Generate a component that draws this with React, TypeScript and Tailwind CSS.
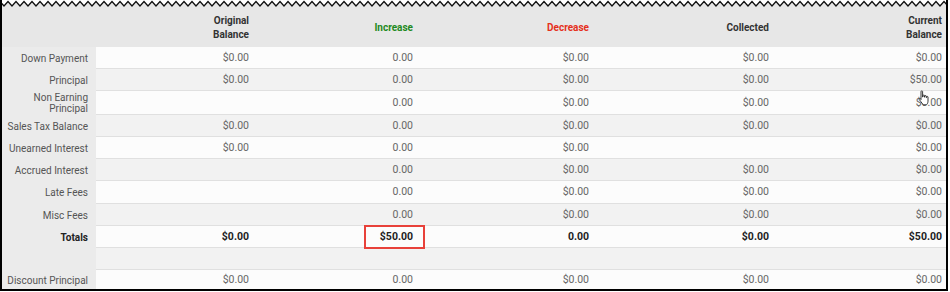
import React from 'react'

type Row = {
  label: string
  values: string[]
  bold?: boolean
  h: string
}

const rows: Row[] = [
  { label: 'Down Payment', values: ['$0.00', '0.00', '$0.00', '$0.00', '$0.00'], h: 'h-[22px]' },
  { label: 'Principal', values: ['$0.00', '0.00', '$0.00', '$0.00', '$50.00'], h: 'h-[22px]' },
  { label: 'Non Earning Principal', values: ['', '0.00', '$0.00', '$0.00', '$0.00'], h: 'h-[24px]' },
  { label: 'Sales Tax Balance', values: ['$0.00', '0.00', '$0.00', '$0.00', '$0.00'], h: 'h-[22px]' },
  { label: 'Unearned Interest', values: ['$0.00', '0.00', '$0.00', '', '$0.00'], h: 'h-[22px]' },
  { label: 'Accrued Interest', values: ['', '0.00', '$0.00', '$0.00', '$0.00'], h: 'h-[22px]' },
  { label: 'Late Fees', values: ['', '0.00', '$0.00', '$0.00', '$0.00'], h: 'h-[23px]' },
  { label: 'Misc Fees', values: ['', '0.00', '$0.00', '$0.00', '$0.00'], h: 'h-[22px]' },
  { label: 'Totals', values: ['$0.00', '$50.00', '0.00', '$0.00', '$50.00'], bold: true, h: 'h-[22px]' },
  { label: '', values: ['', '', '', '', ''], h: 'h-[22px]' },
  { label: 'Discount Principal', values: ['$0.00', '0.00', '$0.00', '$0.00', '$0.00'], h: 'h-[21px]' },
]

const colW = ['w-[157px]', 'w-[164px]', 'w-[176px]', 'w-[180px]', 'flex-1']

const Zigzag: React.FC = () => {
  const pts: string[] = []
  for (let x = -4, i = 0; x <= 956; x += 4, i++) {
    pts.push(`${x},${i % 2 === 0 ? 6 : 1.5}`)
  }
  const line = pts.join(' ')
  return (
    <svg width="950" height="8" className="block">
      <polygon points={`${line} 956,8 -4,8`} fill="#e7e7e7" />
      <polyline points={line} fill="none" stroke="#111" strokeWidth="1.3" />
    </svg>
  )
}

const Cursor: React.FC = () => (
  <svg width="14" height="16" viewBox="0 0 14 16" className="absolute left-[917px] top-[90px] z-20">
    <path
      d="M4 1.5c0-.8 1.6-.8 1.6 0V7l.4-.1V5.6c0-.8 1.5-.8 1.5 0V7.2h.3V6.2c0-.8 1.5-.8 1.5 0v1.4h.3V7c0-.8 1.4-.8 1.4 0v4.2c0 1.6-.8 3-1.6 3.6H6.2L3.6 11.3 2.2 9.4c-.5-.7.5-1.4 1.1-.8L4 9.6V1.5z"
      fill="#fff"
      stroke="#222"
      strokeWidth="0.9"
      strokeLinejoin="round"
    />
  </svg>
)

export default function App() {
  return (
    <div className="w-[950px] h-[292px] bg-white relative font-['Roboto',sans-serif] text-[10.5px]">
      <div className="w-[948px] h-[291px] border-l-2 border-r-2 border-b-2 border-black flex flex-col overflow-hidden">
        <div className="-ml-[2px]">
          <Zigzag />
        </div>
        <div className="flex h-[39px] bg-[#e7e7e7] font-bold text-[#333] text-[10px] leading-[14px] shrink-0">
          <div className="w-[94px]" />
          <div className={`${colW[0]} flex items-center justify-end text-right pr-[4px]`}>Original<br />Balance</div>
          <div className={`${colW[1]} flex items-center justify-end pr-[4px] text-[#1f8a22]`}>Increase</div>
          <div className={`${colW[2]} flex items-center justify-end pr-[4px] text-[#e5301c]`}>Decrease</div>
          <div className={`${colW[3]} flex items-center justify-end pr-[4px]`}>Collected</div>
          <div className={`${colW[4]} flex items-center justify-end text-right pr-[4px]`}>Current<br />Balance</div>
        </div>
        {rows.map((r, i) => (
          <div key={i} className={`flex ${r.h} shrink-0`}>
            <div
              className={`w-[94px] shrink-0 bg-[#ebebeb] flex items-center justify-end text-right pr-[8px] leading-[11px] whitespace-nowrap text-[10px] ${
                r.bold ? 'font-bold text-[#222]' : 'text-[#555]'
              }`}
            >
              {r.label === 'Non Earning Principal' ? (
                <span>Non Earning<br />Principal</span>
              ) : (
                r.label
              )}
            </div>
            {r.values.map((v, j) => (
              <div
                key={j}
                className={`${colW[j]} relative flex items-center justify-end pr-[4px] border-b border-[#e0e0e0] ${
                  i % 2 === 0 ? 'bg-[#fcfcfc]' : 'bg-[#f2f2f2]'
                } ${r.bold ? 'font-bold text-[#222]' : 'text-[#666]'}`}
              >
                {v}
                {r.bold && j === 1 && (
                  <div className="absolute z-10 left-[111px] -top-[1px] w-[61px] h-[24px] border-2 border-[#e8413a]" />
                )}
              </div>
            ))}
          </div>
        ))}
      </div>
      <Cursor />
    </div>
  )
}
